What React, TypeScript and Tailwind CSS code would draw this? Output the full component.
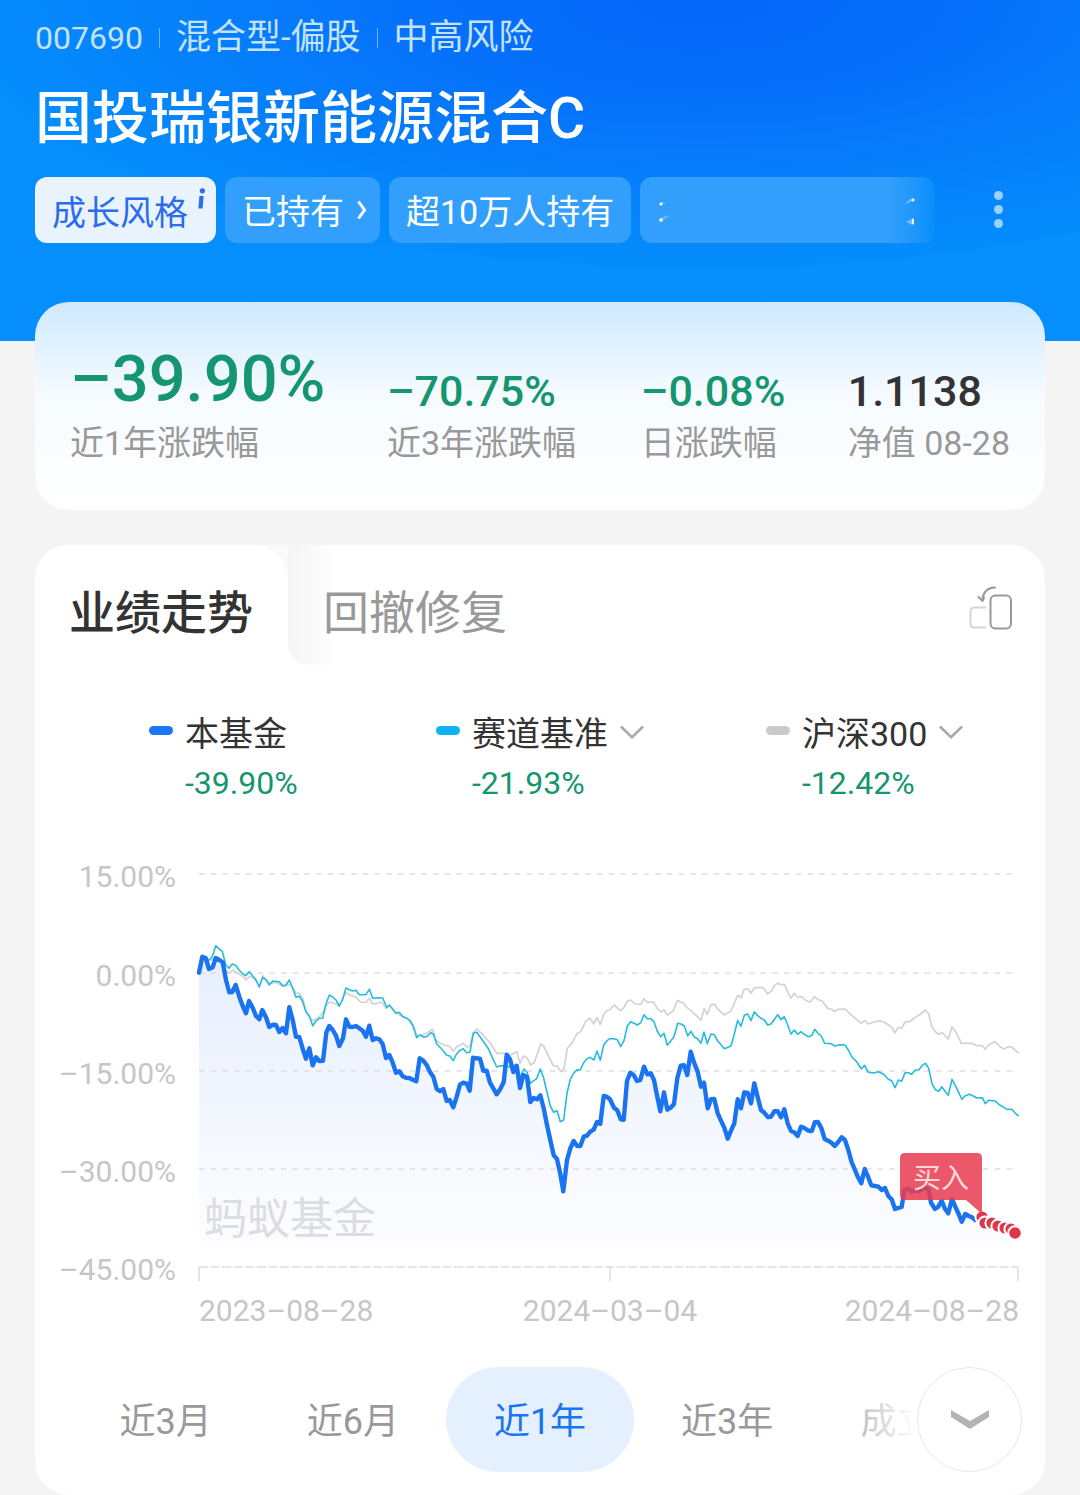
import React from "react";

type Segment = { x: number; y: number; points: string };

// Each segment is traced on a fine grid, three units to one chart unit.
const UNITS = 3;

function toPath(segments: Segment[]): string {
  const coords = segments.flatMap((s) =>
    s.points.split(" ").map((p) => {
      const [px, py] = p.split(",").map(Number);
      return `${(s.x + px / UNITS).toFixed(1)} ${(s.y + py / UNITS).toFixed(1)}`;
    })
  );
  return "M" + coords.join("L");
}

const fund: Segment[] = [
  { x: 190, y: 930, points: "27,128 37,80 47,84 57,117 68,112 77,84 88,90 98,97 108,150 118,187 127,186 137,165 148,200 158,228 168,250 177,213 188,233 198,258 208,268 217,240 228,262 238,291 248,284 258,285 268,306 278,294 288,310 298,232 308,270 318,320 328,321 338,356 348,386 358,355 368,406 378,382 388,393 399,392 409,308 418,288 428,300 438,317 448,348 459,325 468,268 478,290 488,291 498,288 508,295 518,302 528,320 538,287 548,330 558,325 568,328 578,342 588,384 598,375 608,398 618,428 628,424 638,439 648,443 658,444" },
  { x: 390, y: 980, points: "70,300 79,304 89,235 99,241 110,255 120,276 130,290 140,327 150,334 160,327 170,363 179,360 190,382 200,350 210,314 220,308 230,311 239,332 249,233 259,235 270,236 280,272 290,272 300,308 310,325 320,343 331,327 341,306 350,224 360,238 370,276 380,257 390,324 400,285 411,291 421,366 431,354 441,358 451,346 461,385 471,435 481,480 491,526 501,537 511,582 520,634 531,540 541,505 551,483 561,497 571,498 581,470 591,467 601,455 611,449 621,426 631,431 641,348 650,350 660,358" },
  { x: 590, y: 970, points: "72,413 82,421 92,448 101,449 111,333 121,308 131,315 141,333 151,330 162,290 172,313 182,310 192,330 202,380 211,424 222,367 232,419 242,413 252,402 262,325 272,287 282,286 292,315 302,245 313,280 323,305 333,350 342,338 353,415 363,388 373,387 383,430 393,452 403,473 413,506 423,482 433,460 443,388 453,415 463,367 473,369 483,400 493,340 503,382 513,420 523,428 533,441 543,440 553,424 563,424 573,442 583,418 593,460 603,483 613,487 623,498 633,470 643,474 653,481" },
  { x: 800, y: 990, points: "30,423 36,422 44,397 54,396 64,414 74,447 84,452 94,458 104,468 114,457 125,442 135,450 145,480 155,517 165,540 174,562 184,580 194,537 204,560 214,586 225,588 235,590 245,600 255,594 265,618 275,628 285,657 295,654 305,651 313,600 325,596 335,605 345,600 355,604 365,598 378,594 386,600 393,638 405,657 415,650 425,632 435,657 445,670 456,627 466,650 476,672 485,695 496,672 506,678 516,682 526,690" },
];

const sector: Segment[] = [
  { x: 190, y: 930, points: "27,128 37,84 47,86 57,90 67,80 77,47 88,57 97,64 107,105 117,115 127,102 137,106 147,120 157,130 167,137 178,125 188,138 198,150 208,170 218,142 228,150 238,165 248,153 268,155 278,167 288,165 298,150 308,175 318,202 328,198 338,215 348,245 358,258 368,287 378,273 388,265 398,264 408,222 418,195 428,201 438,210 448,228 458,208 468,174 478,179 488,183 498,181 508,194 528,194 538,178 548,205 560,203 578,204 590,232 598,225 608,238 618,250 628,247 638,260 650,264 660,273" },
  { x: 390, y: 980, points: "70,140 80,173 90,165 102,172 112,169 122,158 130,162 140,192 150,202 160,212 170,226 180,228 190,242 198,225 208,212 220,206 230,218 240,216 250,160 260,157 272,173 284,190 296,208 308,235 320,261 332,257 350,258 362,262 375,255 390,290 402,267 412,278 421,310 431,302 440,296 451,267 461,295 471,337 481,378 491,397 501,392 511,425 521,420 531,340 541,298 551,280 561,269 571,270 581,248 591,236 601,232 612,240 621,213 631,241 641,195 651,182 660,176" },
  { x: 590, y: 970, points: "72,206 82,209 92,230 102,212 112,168 122,155 132,160 142,165 152,158 162,134 172,146 182,146 192,155 202,184 212,200 222,190 232,226 242,213 252,200 263,160 273,162 283,168 293,198 303,184 313,201 323,206 333,220 342,186 352,221 363,192 373,194 383,213 393,224 403,236 423,228 433,192 443,151 453,169 463,136 473,132 483,152 493,125 503,137 513,145 523,150 533,165 543,162 563,134 573,149 583,140 593,165 603,192 613,180 623,193 633,185 643,193 655,200" },
  { x: 800, y: 990, points: "30,139 36,135 44,118 54,130 64,138 74,160 94,161 104,168 120,164 135,165 145,180 155,200 170,215 184,237 194,226 205,247 220,249 235,245 250,252 265,268 275,272 285,293 295,270 305,274 315,248 325,248 335,253 345,241 357,239 366,227 376,220 386,235 396,281 406,299 416,304 425,290 435,304 445,316 456,268 466,287 476,308 486,328 496,317 508,313 520,318 530,324 547,323 556,341 566,331 586,333 596,343 608,350 620,358 635,358 646,370 656,378" },
];

const csi300: Segment[] = [
  { x: 190, y: 930, points: "27,128 37,85 57,92 67,88 77,84 88,96 98,98 108,122 118,130 128,120 138,127 158,137 168,150 178,140 188,143 198,152 208,172 218,137 228,148 238,160 258,157 280,170 298,163 308,172 318,190 330,190 338,205 348,245 368,273 388,260 400,245 408,228 418,216 438,222 448,230 458,205 468,188 478,194 498,202 512,216 528,217 538,205 548,222 560,220 575,216 588,235 600,226 618,250 640,260 660,270" },
  { x: 390, y: 980, points: "70,135 80,165 95,166 110,160 128,148 138,180 150,190 180,200 190,214 200,200 220,190 232,202 240,198 250,158 260,147 275,160 300,188 320,220 345,220 362,225 380,215 390,250 400,228 412,235 422,255 432,248 442,222 452,192 462,200 472,220 482,242 490,257 502,259 513,275 522,266 532,205 545,190 562,160 572,155 588,122 600,115 611,132 621,113 631,134 641,102 651,92 660,89" },
  { x: 590, y: 970, points: "72,105 92,122 102,113 112,93 122,90 135,102 152,103 162,86 172,97 190,96 202,115 213,126 222,119 232,135 250,122 263,91 280,100 290,112 303,122 318,136 333,151 343,116 352,133 363,103 375,104 383,117 403,135 423,123 443,76 453,83 463,57 475,57 483,70 493,53 520,53 533,72 545,62 555,45 563,40 573,45 583,43 593,65 603,85 613,70 623,81 635,80 645,90" },
  { x: 800, y: 990, points: "30,36 44,20 54,29 66,32 84,56 94,57 104,65 114,58 135,57 155,76 184,100 194,91 205,102 235,92 252,96 275,112 285,129 295,112 305,115 315,96 330,94 350,79 360,74 376,60 386,72 396,112 406,125 416,133 426,128 445,147 456,110 470,130 484,160 516,160 530,167 547,167 556,178 566,164 585,155 600,170 612,177 625,170 635,171 656,190" },
];

const gridLines = [
  { y: 874, label: "15.00%" },
  { y: 973, label: "0.00%" },
  { y: 1071, label: "–15.00%" },
  { y: 1169, label: "–30.00%" },
  { y: 1267, label: "–45.00%" },
];

const trades = [
  [982, 1217],
  [985, 1223],
  [992, 1223],
  [998, 1226],
  [1005, 1228],
  [1011, 1229],
];

function TrendChart() {
  const fundPath = toPath(fund);
  return (
    <svg viewBox="35 850 1010 480" className="block h-auto w-full" role="img" aria-label="业绩走势">
      <defs>
        <linearGradient id="area" x1="0" y1="960" x2="0" y2="1250" gradientUnits="userSpaceOnUse">
          <stop offset="0" stopColor="#e6effd" />
          <stop offset="0.5" stopColor="#f2f6fe" />
          <stop offset="1" stopColor="#fdfdff" />
        </linearGradient>
      </defs>
      <path d={`${fundPath}L1015 1234V1250H199Z`} fill="url(#area)" />
      {gridLines.map((g) => (
        <g key={g.label}>
          <line x1="199" x2="1018" y1={g.y} y2={g.y} stroke="#dedede" strokeWidth="1.6" strokeDasharray={g.y === 1267 ? "9 2.6" : "5.5 6.2"} />
          <text x="176" y={g.y + 13} textAnchor="end" className="fill-[#c6c6c6] text-[30px]">
            {g.label}
          </text>
        </g>
      ))}
      <path d="M199 1267V1281M610 1267V1281M1018 1267V1281" stroke="#dcdcdc" strokeWidth="1.6" fill="none" />
      <text x="204" y="1234" className="fill-[#dcdde0] text-[43px]">蚂蚁基金</text>
      <path d={toPath(csi300)} fill="none" stroke="#d3d3d5" strokeWidth="1.7" strokeLinejoin="round" />
      <path d={toPath(sector)} fill="none" stroke="#25bcdf" strokeWidth="1.6" strokeLinejoin="round" />
      <path d={fundPath} fill="none" stroke="#1a74f2" strokeWidth="4.4" strokeLinejoin="round" strokeLinecap="round" />
      {trades.map(([x, y]) => (
        <circle key={`${x}-${y}`} cx={x} cy={y} r="6.6" fill="#d93a4b" stroke="#fff" strokeWidth="2" />
      ))}
      <circle cx="1015" cy="1233" r="6.8" fill="#e0344a" stroke="#fff" strokeWidth="2" />
      <path d="M905 1153H977Q982 1153 982 1158V1214L966 1200H905Q900 1200 900 1195V1158Q900 1153 905 1153Z" fill="#e83d50" fillOpacity="0.86" />
      <text x="941" y="1188" textAnchor="middle" className="fill-[#fbd9dd] text-[28px]">买入</text>
      <g className="fill-[#c6c6c6] text-[30px]">
        <text x="199" y="1321">2023–08–28</text>
        <text x="610" y="1321" textAnchor="middle">2024–03–04</text>
        <text x="1019" y="1321" textAnchor="end">2024–08–28</text>
      </g>
    </svg>
  );
}

function Stat({ value, label, tone, big }: { value: string; label: string; tone: string; big?: boolean }) {
  return (
    <div className="flex flex-col justify-end whitespace-nowrap">
      <dd className={`order-1 font-medium ${tone} ${big ? "pb-1 text-[65px] leading-[68px]" : "text-[43px] leading-[52px]"}`}>{value}</dd>
      <dt className="order-2 text-[34px] leading-[52px] text-[#999]">{label}</dt>
    </div>
  );
}

function ChevronDown() {
  return (
    <svg viewBox="0 0 26 16" className="mb-1 h-[15px] w-6 shrink-0" fill="none" stroke="#aaa" strokeWidth="2.8" aria-hidden="true">
      <path d="M1 1.5L13 13L25 1.5" />
    </svg>
  );
}

function Legend({ color, name, value, menu }: { color: string; name: string; value: string; menu?: boolean }) {
  const label = (
    <>
      <span className={`mb-2 h-[9px] w-6 shrink-0 rounded-full ${color}`} />
      <span className="mr-3 ml-3 text-[34px] leading-[50px] text-[#333]">{name}</span>
      {menu && <ChevronDown />}
    </>
  );
  return (
    <div className="whitespace-nowrap">
      {menu ? (
        <button type="button" className="flex items-center">{label}</button>
      ) : (
        <div className="flex items-center">{label}</div>
      )}
      <div className="pl-9 text-[32px] leading-[48px] text-[#159570]">{value}</div>
    </div>
  );
}

const ranges = ["近3月", "近6月", "近1年", "近3年", "成立来"];

export default function App() {
  const [range, setRange] = React.useState("近1年");
  return (
    <div className="min-h-screen bg-[#f4f4f4] font-['Roboto','Noto_Sans_CJK_SC',sans-serif]">
      <header className="bg-[#058efc] bg-[radial-gradient(ellipse_70%_80%_at_65%_0%,#0566fa_0%,#0670fa_35%,#048efc00_100%)] px-[35px] pt-3 pb-[98px]">
        <div className="flex h-[52px] items-center gap-4 text-[35px] whitespace-nowrap text-[#c3e2fe]">
          <span className="text-[32px]">007690</span>
          <span className="h-5 w-px bg-[#6bb7fd]" />
          <span>混合型-偏股</span>
          <span className="h-5 w-px bg-[#6bb7fd]" />
          <span>中高风险</span>
        </div>
        <h1 className="mt-4 text-[57px] leading-[78px] font-medium whitespace-nowrap text-white">国投瑞银新能源混合C</h1>
        <div className="mt-[19px] flex items-center whitespace-nowrap">
          <div className="flex min-w-0 flex-1 gap-[9px] text-[34px] leading-[60px] text-white">
            <button type="button" className="flex h-[66px] shrink-0 rounded-xl bg-[#e8f3fe] pt-1.5 pr-2.5 pl-[17px] text-[#2a6bf0]">
              <span>成长风格</span>
              <svg viewBox="0 0 10 24" className="mt-1 ml-2 h-6 w-2.5" fill="#2a6bf0" aria-hidden="true">
                <circle cx="6.4" cy="3.8" r="2.6" />
                <path d="M3.4 9H7.6L6.6 21.5H2.4Z" />
              </svg>
            </button>
            <button type="button" className="flex h-[66px] shrink-0 items-center gap-3 rounded-xl bg-[#319ffb] pt-1 pr-3 pl-[17px]">
              <span>已持有</span>
              <svg viewBox="0 0 12 20" className="mb-1 h-5 w-3" fill="none" stroke="#fff" strokeWidth="3" aria-hidden="true">
                <path d="M2.5 1.5L8.5 10L2.5 18.5" />
              </svg>
            </button>
            <button type="button" className="h-[66px] shrink-0 rounded-xl bg-[#319ffb] px-[17px] pt-1">超10万人持有</button>
            <div className="flex h-[66px] w-[295px] items-center justify-between rounded-xl bg-linear-to-r from-[#319ffb] from-85% to-[#058efc] px-[17px]">
              <svg viewBox="0 0 14 30" className="h-[30px] w-3.5" aria-hidden="true">
                <path d="M3 8Q6 6 9 8Q5 8 3 10Z M3 24Q7 21 14 20Q7 24 4 26Z" fill="#6fbdfc" />
                <circle cx="4" cy="9" r="1.6" fill="#fff" />
                <circle cx="4" cy="25" r="1.8" fill="#fff" />
              </svg>
              <svg viewBox="0 0 14 34" className="h-[34px] w-3.5" aria-hidden="true">
                <path d="M1 11Q6 5 10 5Q9 9 1 11Z M2 28Q7 28 8 25H10V32Q5 32 2 28Z" fill="#6fbdfc" />
                <circle cx="9" cy="7" r="1.5" fill="#e9f6ff" />
                <path d="M9 31V26" stroke="#e9f6ff" strokeWidth="2" />
              </svg>
            </div>
          </div>
          <button type="button" aria-label="更多" className="flex flex-col gap-[5px] px-2 pr-[42px] pb-0.5">
            <span className="size-[9px] rounded-full bg-[#99d2fe]" />
            <span className="size-[9px] rounded-full bg-[#99d2fe]" />
            <span className="size-[9px] rounded-full bg-[#99d2fe]" />
          </button>
        </div>
      </header>

      <main className="px-[35px]">
        <dl className="relative -mt-[39px] grid grid-cols-[317fr_254fr_207fr_162fr] rounded-[34px] bg-linear-to-b from-[#cfe9ff] via-[#f6fbff] via-45% to-white px-[35px] pt-[43px] pb-[41px]">
          <Stat value="–39.90%" label="近1年涨跌幅" tone="text-[#159570]" big />
          <Stat value="–70.75%" label="近3年涨跌幅" tone="text-[#159570]" />
          <Stat value="–0.08%" label="日涨跌幅" tone="text-[#159570]" />
          <Stat value="1.1138" label="净值 08-28" tone="text-[#333]" />
        </dl>

        <section className="mt-[35px] overflow-hidden rounded-[34px] bg-white pb-[23px]">
          <div className="flex text-[46px] leading-[60px]">
            <div className="w-[253px] bg-[#fafafa]">
              <button type="button" className="h-[120px] w-full rounded-tr-[34px] bg-white pt-4 pl-[34px] text-left font-medium text-[#333]">业绩走势</button>
            </div>
            <button type="button" className="h-[120px] rounded-bl-[22px] bg-linear-to-r from-[#f5f5f5] to-white to-[48px] pt-4 pr-4 pl-[35px] text-[#999]">回撤修复</button>
            <button type="button" aria-label="横屏查看" className="mt-10 mr-8 ml-auto h-12 w-11">
              <svg viewBox="0 0 44 48" className="h-12 w-11" fill="none" strokeWidth="2" strokeLinecap="round" strokeLinejoin="round" aria-hidden="true">
                <rect x="21.5" y="10.5" width="20.5" height="33" rx="5" stroke="#999" />
                <path d="M16.5 22.5H5.5Q1.5 22.5 1.5 26.5V38.5Q1.5 42.5 5.5 42.5H16.5" stroke="#d4d4d4" />
                <path d="M26 2.5Q14 3 13.5 15.5M9.5 12L13.5 16L15 12.5" stroke="#999" />
              </svg>
            </button>
          </div>

          <div className="mt-[44px] grid grid-cols-[287fr_330fr_244fr] pr-[35px] pl-[114px]">
            <Legend color="bg-[#1b76f8]" name="本基金" value="-39.90%" />
            <Legend color="bg-[#0fb2f2]" name="赛道基准" value="-21.93%" menu />
            <Legend color="bg-[#cacaca]" name="沪深300" value="-12.42%" menu />
          </div>

          <div className="mt-[43px]">
            <TrendChart />
          </div>

          <div className="relative mt-[37px] grid grid-cols-5 px-[37px]">
            {ranges.map((r) => (
              <button
                key={r}
                type="button"
                onClick={() => setRange(r)}
                className={`h-[105px] rounded-full pt-1 text-[36px] whitespace-nowrap ${r === range ? "bg-[#e5f0fe] text-[#1a74f2]" : "text-[#999]"}`}
              >
                {r}
              </button>
            ))}
            <div className="pointer-events-none absolute inset-y-0 right-0 w-[220px] bg-linear-to-r from-white/0 to-white to-[90px]" />
            <button type="button" aria-label="展开" className="absolute top-0 right-[23px] flex size-[105px] items-center justify-center rounded-full border border-[#e6e6e6] bg-white">
              <svg viewBox="0 0 38 20" className="h-5 w-[38px]" fill="#b4b4b4" aria-hidden="true">
                <path d="M0 0L19 11L38 0V7L19 19L0 7Z" />
              </svg>
            </button>
          </div>
        </section>
      </main>
    </div>
  );
}
